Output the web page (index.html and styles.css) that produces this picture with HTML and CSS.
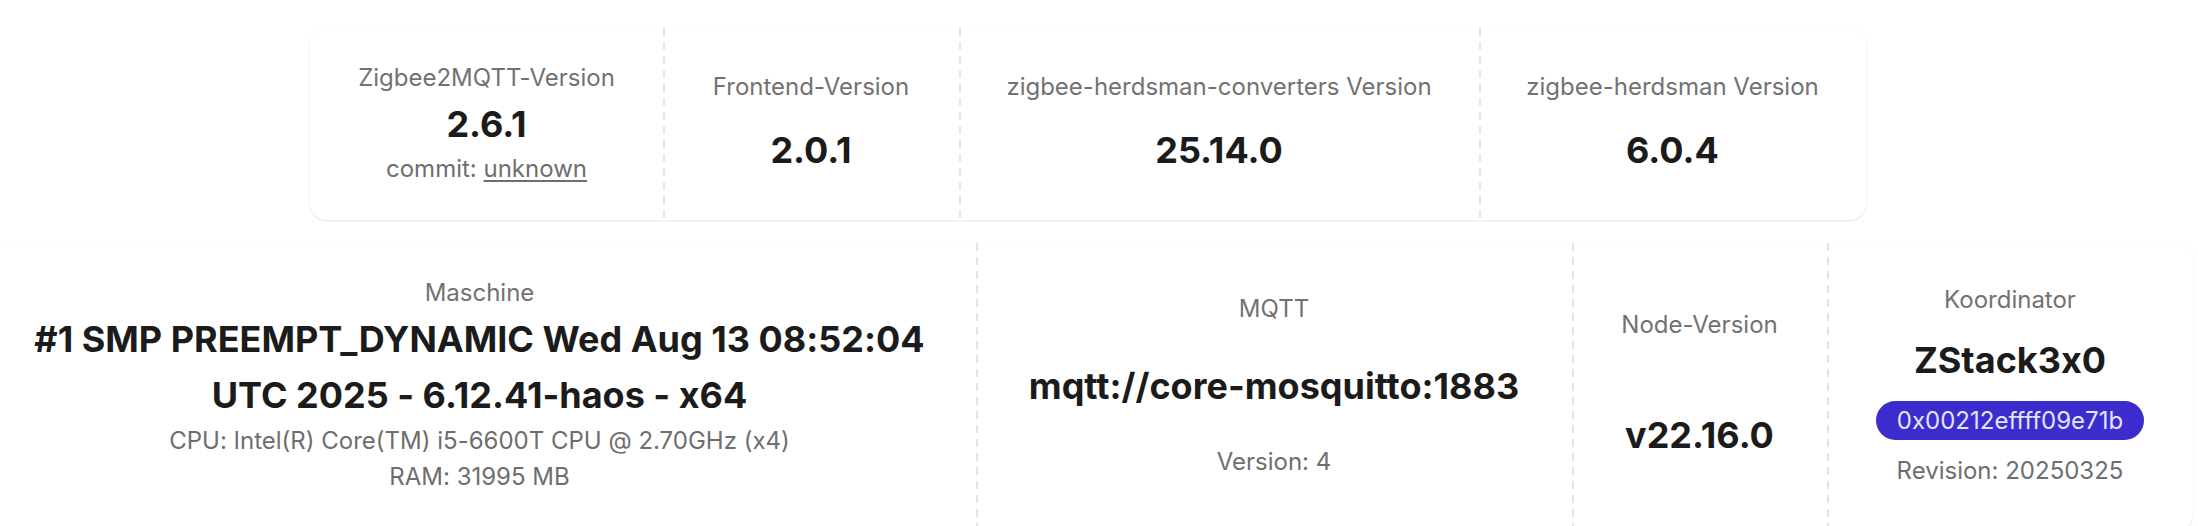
FILE: index.html
```html
<!DOCTYPE html>
<html lang="de">
<head>
<meta charset="utf-8">
<title>Zigbee2MQTT – Info</title>
<link rel="stylesheet" href="styles.css">
</head>
<body>
<main class="page">
  <section class="stats stats-top">
    <div class="stat">
      <div class="stat-title">Zigbee2MQTT-Version</div>
      <div class="stat-value">2.6.1</div>
      <div class="stat-desc">commit: <a class="link" href="#">unknown</a></div>
    </div>
    <div class="stat">
      <div class="stat-title">Frontend-Version</div>
      <div class="stat-value">2.0.1</div>
    </div>
    <div class="stat">
      <div class="stat-title">zigbee-herdsman-converters Version</div>
      <div class="stat-value">25.14.0</div>
    </div>
    <div class="stat">
      <div class="stat-title">zigbee-herdsman Version</div>
      <div class="stat-value">6.0.4</div>
    </div>
  </section>

  <section class="stats stats-bottom">
    <div class="stat stat-machine">
      <div class="stat-title">Maschine</div>
      <div class="stat-value stat-value-wrap">#1 SMP PREEMPT_DYNAMIC Wed Aug 13 08:52:04 UTC 2025 - 6.12.41-haos - x64</div>
      <div class="stat-desc stat-desc-tight">CPU: Intel(R) Core(TM) i5-6600T CPU @ 2.70GHz (x4)</div>
      <div class="stat-desc stat-desc-tight">RAM: 31995 MB</div>
    </div>
    <div class="stat">
      <div class="stat-title">MQTT</div>
      <div class="stat-value">mqtt://core-mosquitto:1883</div>
      <div class="stat-desc">Version: 4</div>
    </div>
    <div class="stat">
      <div class="stat-title">Node-Version</div>
      <div class="stat-value">v22.16.0</div>
    </div>
    <div class="stat">
      <div class="stat-title">Koordinator</div>
      <div class="stat-value">ZStack3x0</div>
      <div class="badge">0x00212effff09e71b</div>
      <div class="stat-desc">Revision: 20250325</div>
    </div>
  </section>
</main>
</body>
</html>
```

FILE: styles.css
```css
html, body {
  margin: 0;
  padding: 0;
  background: #ffffff;
}

body {
  font-family: Inter, "Noto Sans", "Liberation Sans", sans-serif;
  font-feature-settings: "calt" 0;
  color: #1b1b1b;
  overflow: hidden;
}

.page {
  width: 2176px;
  display: flex;
  flex-direction: column;
  align-items: center;
  gap: 23px;
  padding-top: 28px;
}

.stats {
  display: grid;
  grid-auto-flow: column;
  background: #ffffff;
  border-radius: 17px;
  box-shadow: 0 1px 3px rgba(0, 0, 0, 0.08), 0 1px 2px rgba(0, 0, 0, 0.04);
  flex: none;
}

.stats-top {
  grid-template-columns: 353px 296px 520px 387px;
}

.stats-bottom {
  grid-template-columns: 993px 596px 255px 366px;
}

.stats-bottom .stat {
  padding-bottom: 36px;
}

.stat {
  display: grid;
  grid-template-columns: 1fr;
  align-items: center;
  justify-items: center;
  text-align: center;
  padding: 32px 40px 34px;
  min-width: 0;
}

.stats-bottom .stat-machine {
  padding-left: 30px;
  padding-right: 30px;
}

.stat + .stat {
  background-image: repeating-linear-gradient(to bottom, #e4e4e4 0 8px, transparent 8px 14px);
  background-size: 2px 100%;
  background-repeat: no-repeat;
  background-position: left top;
}

.stat-title {
  font-size: 24px;
  line-height: 36px;
  color: #727272;
  white-space: nowrap;
}

.stat-value {
  font-size: 36px;
  line-height: 56px;
  font-weight: 700;
  color: #1b1b1b;
  white-space: nowrap;
}

.stat-value-wrap {
  white-space: normal;
}

.stat-desc {
  font-size: 24px;
  line-height: 34px;
  color: #6e6e6e;
  white-space: nowrap;
}

.stat-desc-tight {
  line-height: 36px;
}

.link {
  color: inherit;
  text-decoration: underline;
  text-underline-offset: 3px;
}

.badge {
  display: inline-flex;
  align-items: center;
  justify-content: center;
  height: 39px;
  padding: 0 21px;
  border-radius: 999px;
  background: #3c2ccd;
  color: #e2e4ff;
  font-size: 24px;
  line-height: 1;
  white-space: nowrap;
}
```
